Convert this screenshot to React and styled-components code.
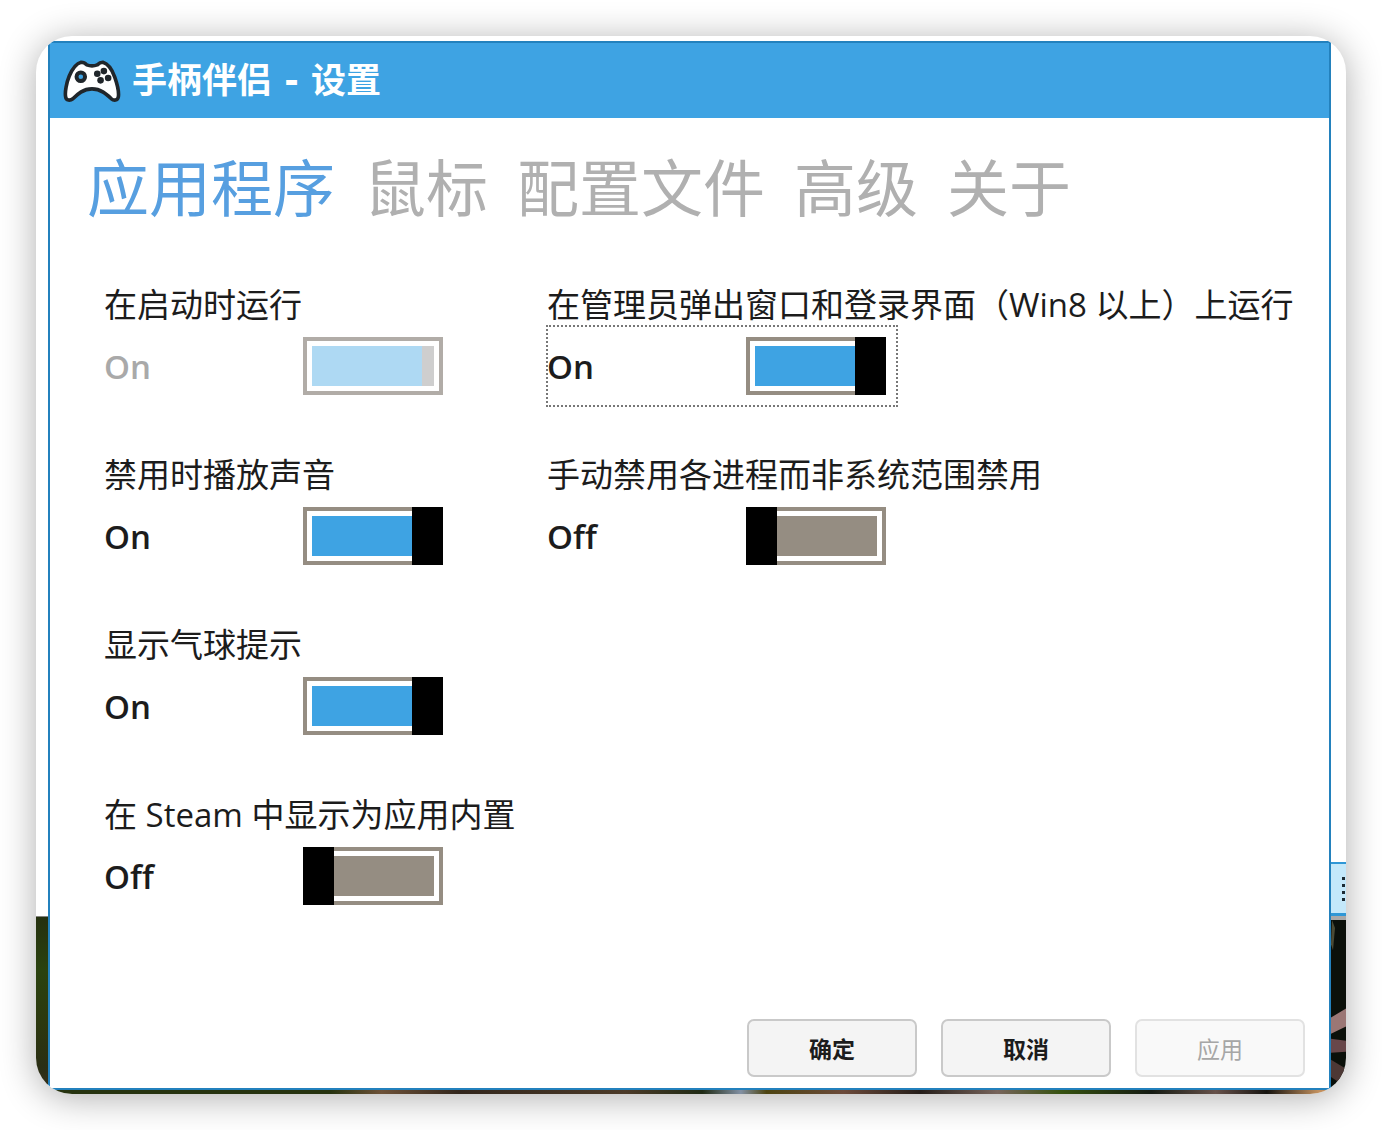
import React, { useState } from "react";
import styled, { createGlobalStyle, css } from "styled-components";

const GlobalStyle = createGlobalStyle`
  *, *::before, *::after { box-sizing: border-box; }
  body { margin: 0; background: #fff; }
  button, input { font: inherit; margin: 0; }
`;

const Page = styled.div`
  min-height: 100vh;
  padding: 36px;
  display: flex;
  font-family: "Open Sans", "Noto Sans CJK SC", sans-serif;
  color: #1c1c1c;
`;

const Desktop = styled.div`
  flex: 1;
  min-width: 0;
  display: grid;
  grid-template-columns: 12px minmax(0, 1fr) 15px;
  grid-template-rows: 5px 1fr 4px;
  overflow: hidden;
  border-radius: 36px;
  background: #fff;
  box-shadow: 0 4px 36px rgba(0, 0, 0, 0.32);
`;

const LeftEdge = styled.div`
  grid-column: 1;
  grid-row: 1 / 4;
  align-self: end;
  height: 178px;
  border-top: 1px solid #85857f;
  background: linear-gradient(#25300f, #2a420f 30%, #2c380f 60%, #2a2e14 85%, #3a301c);
`;

const RightEdge = styled.div`
  grid-column: 3;
  grid-row: 1 / 4;
  display: flex;
  flex-direction: column;
  justify-content: flex-end;
`;

const ToolbarEnd = styled.div`
  height: 54px;
  padding-right: 1px;
  display: flex;
  justify-content: flex-end;
  align-items: center;
  border: solid #2f97d6;
  border-width: 2px 0 3px;
  background: #c4e8fa;
`;

const Photo = styled.svg`
  width: 15px;
  height: 178px;
  border-top: 4px solid #a9a9a9;
  background: #0b100a;
`;

const BottomEdge = styled.div`
  grid-column: 2;
  grid-row: 3;
  background: linear-gradient(
    90deg,
    #26330f 0 22%, #6d5138 26%, #32261c 32%, #4b3a28 45%, #1f2a14 51%,
    #8290a3 54%, #4d4411 56%, #6b4a3a 62%, #241d19 68%, #77645b 74%,
    #35510f 79%, #141a12 86%, #66514a 91%, #15130f 95%, #c2905e 99%
  );
`;

const Window = styled.main`
  grid-column: 2;
  grid-row: 2;
  display: flex;
  flex-direction: column;
  border: 2px solid #2381bd;
  background: #fff;
`;

const TitleBar = styled.header`
  height: 75px;
  padding: 0 13px;
  display: flex;
  align-items: center;
  gap: 11px;
  background: #3ea3e3;
`;

const Title = styled.h1`
  margin: 0;
  font-family: "DejaVu Sans", "Noto Sans CJK SC", sans-serif;
  font-size: 35px;
  line-height: 44px;
  font-weight: 700;
  white-space: nowrap;
  color: #fff;
`;

const Tabs = styled.nav`
  padding: 24px 37px 0;
  display: flex;
  gap: 29px;
`;

const Tab = styled.button`
  padding: 0;
  border: 0;
  background: none;
  font-size: 62px;
  line-height: 92px;
  white-space: nowrap;
  color: ${(p) => (p.$active ? "#579fe0" : "#b0b0b0")};
`;

const Settings = styled.div`
  padding: 50px 37px 0 54px;
  display: flex;
  gap: 93px;
`;

const Column = styled.div`
  width: 350px;
  display: flex;
  flex-direction: column;
  gap: 48px;
`;

const Setting = styled.div`
  display: flex;
  flex-direction: column;
`;

const Caption = styled.label`
  font-size: 33px;
  line-height: 42px;
  white-space: nowrap;
`;

const ToggleRow = styled.div`
  height: 80px;
  padding-right: 11px;
  display: flex;
  align-items: center;
  justify-content: space-between;
  outline: ${(p) => (p.$focused ? "2px dotted #777" : "none")};
  outline-offset: -1px;
`;

const State = styled.span`
  padding-top: 2px;
  font-size: 33px;
  line-height: 44px;
  font-weight: 600;
  color: ${(p) => (p.$disabled ? "#a9a9a9" : "#1c1c1c")};
`;

const Switch = styled.input`
  appearance: none;
  position: relative;
  width: 140px;
  height: 58px;
  padding: 5px;
  border: 4px solid #958d82;
  background: ${(p) => (p.checked ? "#3ea3e3" : "#958d82")} content-box;
  outline: none;

  &::before {
    content: "";
    position: absolute;
    top: -4px;
    bottom: -4px;
    ${(p) => (p.checked ? "right" : "left")}: -4px;
    width: 31px;
    background: #000;
  }

  ${(p) =>
    p.disabled &&
    css`
      border-color: #b1aca7;
      background-color: #aed9f3;

      &::before {
        top: 5px;
        bottom: 5px;
        right: 5px;
        width: 12px;
        background: #cecece;
      }
    `}
`;

const Actions = styled.footer`
  margin-top: auto;
  padding: 0 24px 11px;
  display: flex;
  justify-content: flex-end;
  gap: 24px;
`;

const Action = styled.button`
  width: 170px;
  height: 58px;
  padding: 2px 0 0;
  border: 2px solid #c9c9c9;
  border-radius: 7px;
  background: #f4f4f4;
  font-size: 23px;
  line-height: 30px;
  font-weight: 700;
  color: #1c1c1c;

  &:disabled {
    border-color: #e2e2e2;
    background: #f9f9f9;
    font-weight: 400;
    color: #a6a6a6;
  }
`;

function Gamepad() {
  return (
    <svg width="58" height="44" viewBox="100 84 176 132" aria-hidden="true">
      <path
        d="M155 93Q165 93 172 101Q188 107 204 101Q212 93 221 93C238 98 250 118 257 138C264 158 270 185 268 198C266 210 254 210 247 204C232 190 215 174 188 174C161 174 144 190 130 204C122 210 109 210 108 198C105 185 111 154 119 135C127 116 139 97 155 93Z"
        fill="#fff"
        stroke="#20262b"
        strokeWidth="11"
        strokeLinejoin="round"
      />
      <circle cx="154" cy="137" r="13" fill="#3ea3e3" stroke="#20262b" strokeWidth="12" />
      <g fill="#20262b">
        <circle cx="224" cy="120" r="10" />
        <circle cx="204" cy="128" r="10" />
        <circle cx="237" cy="141" r="10" />
        <circle cx="214" cy="148" r="10" />
      </g>
    </svg>
  );
}

function DesktopEdge() {
  return (
    <RightEdge aria-hidden="true">
      <ToolbarEnd>
        <svg width="3" height="26" viewBox="0 0 3 26">
          <path d="M0 2.5H3M0 9.5H3M0 16.5H3M0 23.5H3" stroke="#1c2a33" strokeWidth="3" />
        </svg>
      </ToolbarEnd>
      <Photo viewBox="0 0 15 173" preserveAspectRatio="none">
        <path d="M1 0L4 8L2 30L0 24Z" fill="#4b4b35" />
        <path d="M0 97L15 88V106L0 113Z" fill="#9b7775" />
        <path d="M0 118L15 120V131L0 132Z" fill="#68474a" />
        <path d="M0 139L15 148V166L0 156Z" fill="#4d3835" />
      </Photo>
    </RightEdge>
  );
}

const TABS = ["应用程序", "鼠标", "配置文件", "高级", "关于"];

const COLUMNS = [
  [
    { id: "startup", caption: "在启动时运行", on: true, disabled: true },
    { id: "sound", caption: "禁用时播放声音", on: true },
    { id: "balloon", caption: "显示气球提示", on: true },
    { id: "steam", caption: "在 Steam 中显示为应用内置", on: false },
  ],
  [
    { id: "admin", caption: "在管理员弹出窗口和登录界面（Win8 以上）上运行", on: true },
    { id: "process", caption: "手动禁用各进程而非系统范围禁用", on: false },
  ],
];

function ToggleSetting({ id, caption, on, disabled, focused, onFocus }) {
  const [checked, setChecked] = useState(on);
  return (
    <Setting>
      <Caption htmlFor={id}>{caption}</Caption>
      <ToggleRow $focused={focused}>
        <State $disabled={disabled}>{checked ? "On" : "Off"}</State>
        <Switch
          id={id}
          type="checkbox"
          role="switch"
          checked={checked}
          disabled={disabled}
          onFocus={onFocus}
          onChange={(e) => setChecked(e.target.checked)}
        />
      </ToggleRow>
    </Setting>
  );
}

export default function App() {
  const [tab, setTab] = useState(TABS[0]);
  const [focused, setFocused] = useState("admin");
  return (
    <Page>
      <GlobalStyle />
      <Desktop>
        <LeftEdge />
        <Window>
          <TitleBar>
            <Gamepad />
            <Title>手柄伴侣 - 设置</Title>
          </TitleBar>
          <Tabs>
            {TABS.map((name) => (
              <Tab key={name} type="button" $active={name === tab} onClick={() => setTab(name)}>
                {name}
              </Tab>
            ))}
          </Tabs>
          <Settings>
            {COLUMNS.map((items, i) => (
              <Column key={i}>
                {items.map((item) => (
                  <ToggleSetting
                    key={item.id}
                    {...item}
                    focused={focused === item.id}
                    onFocus={() => setFocused(item.id)}
                  />
                ))}
              </Column>
            ))}
          </Settings>
          <Actions>
            <Action type="button">确定</Action>
            <Action type="button">取消</Action>
            <Action type="button" disabled>应用</Action>
          </Actions>
        </Window>
        <BottomEdge />
        <DesktopEdge />
      </Desktop>
    </Page>
  );
}
